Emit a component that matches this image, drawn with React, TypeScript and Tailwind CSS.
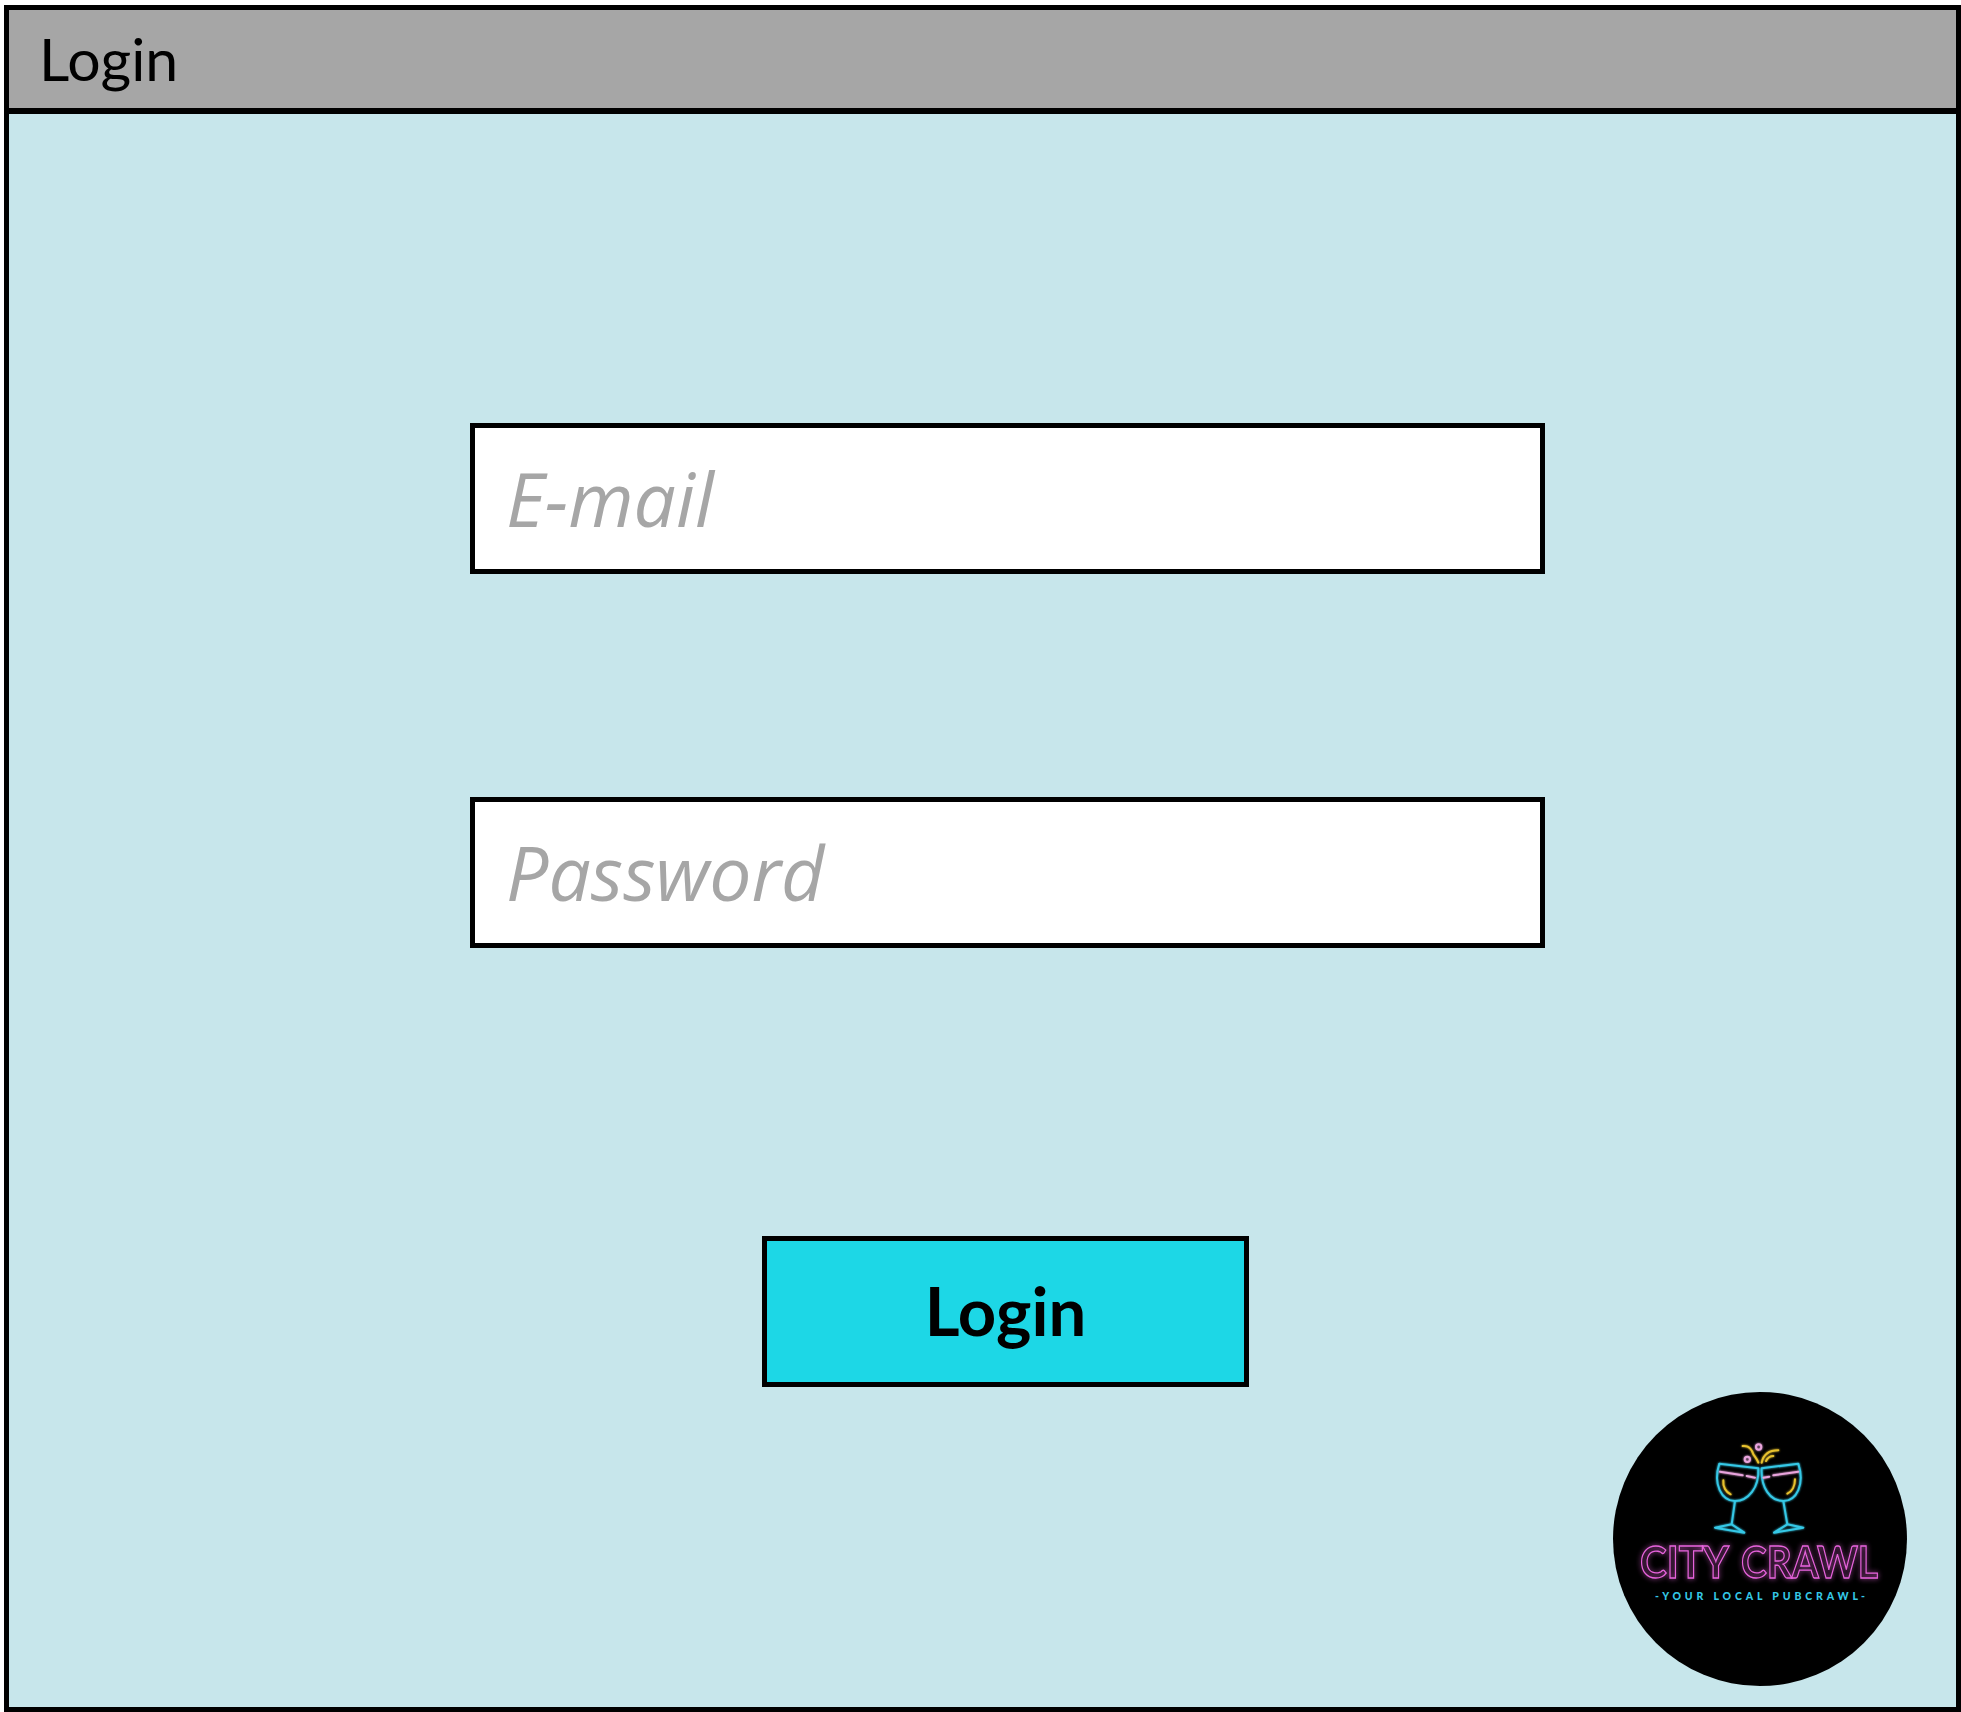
import React from "react";

function CityCrawlLogo() {
    return (
        <svg className="block size-[294px]" viewBox="0 0 294 294">
            <defs>
                <filter id="glow" x="-20%" y="-20%" width="140%" height="140%">
                    <feGaussianBlur stdDeviation="2.5" result="blur" />
                    <feMerge>
                        <feMergeNode in="blur" />
                        <feMergeNode in="SourceGraphic" />
                    </feMerge>
                </filter>
            </defs>
            <circle cx="147" cy="147" r="147" fill="#000" />
            <g transform="translate(87 39) scale(0.3333)" fill="none" strokeLinecap="round" strokeLinejoin="round" filter="url(#glow)">
                <g stroke="#35c8e6" strokeWidth="6">
                    <path d="M58 98 L175 112 C178 170 145 210 105 210 C65 210 38 160 58 98 Z" />
                    <path d="M105 210 L95 280 M95 280 L45 290 L133 305 Z" />
                    <path d="M185 112 L295 98 C315 160 290 210 250 210 C210 210 182 170 185 112 Z" />
                    <path d="M250 210 L262 280 M262 280 L310 290 L222 305 Z" />
                </g>
                <g stroke="#e9a4dc" strokeWidth="6">
                    <path d="M60 122 L128 133 M140 135 L165 140" />
                    <path d="M190 140 L208 137 M220 133 L295 122" />
                    <circle cx="176" cy="48" r="8" />
                    <circle cx="142" cy="85" r="8" />
                </g>
                <g stroke="#e8c22e" strokeWidth="6">
                    <path d="M70 148 C68 168 78 184 92 190" />
                    <path d="M285 145 C285 165 276 182 262 188" />
                    <path d="M128 45 C150 42 158 62 160 70 C166 78 172 86 175 95" />
                    <path d="M235 58 C205 58 190 72 185 95" />
                    <path d="M220 75 C208 75 202 82 198 90" />
                </g>
            </g>
            <g fill="none" stroke="#e763dc" strokeWidth="1.3" filter="url(#glow)" className="font-['Lato',sans-serif] text-[44px] font-bold">
                <text x="27" y="186" textLength="89" lengthAdjust="spacingAndGlyphs">
                    CITY
                </text>
                <text x="128" y="186" textLength="137" lengthAdjust="spacingAndGlyphs">
                    CRAWL
                </text>
            </g>
            <text
                x="42"
                y="208"
                textLength="210"
                lengthAdjust="spacing"
                fill="#35c8e6"
                className="font-['Lato',sans-serif] text-[10.5px] font-black"
            >
                -YOUR LOCAL PUBCRAWL-
            </text>
        </svg>
    );
}

function Field({ placeholder }: { placeholder: string }) {
    return (
        <input
            placeholder={placeholder}
            className="ml-[461px] block h-[151px] w-[1075px] border-[5px] border-black bg-white pl-[31px] pb-[2px] font-['Open_Sans',sans-serif] text-[75px] font-medium italic outline-none placeholder:text-[#a6a6a6] placeholder:opacity-100"
        />
    );
}

export default function App() {
    return (
        <div className="h-[1712px] w-[1961px] bg-white pl-[4px] pt-[5px] font-['Lato',sans-serif] text-black">
            <div className="flex h-[1707px] w-[1957px] flex-col border-[5px] border-black bg-[#c7e6eb]">
                <header className="flex h-[104px] shrink-0 items-center border-b-[6px] border-black bg-[#a6a6a6] pb-[2px] pl-[30px] text-[59px] leading-none">
                    Login
                </header>
                <main className="flex flex-1 flex-col pt-[309px]">
                    <Field placeholder="E-mail" />
                    <div className="h-[223px]" />
                    <Field placeholder="Password" />
                    <button className="ml-[753px] mt-[288px] flex h-[151px] w-[487px] items-center justify-center border-[5px] border-black bg-[#1dd7e6] pb-[2px] text-[67px] leading-none font-bold">
                        Login
                    </button>
                    <div className="mt-[5px] flex justify-end pr-[49px]">
                        <CityCrawlLogo />
                    </div>
                </main>
            </div>
        </div>
    );
}
